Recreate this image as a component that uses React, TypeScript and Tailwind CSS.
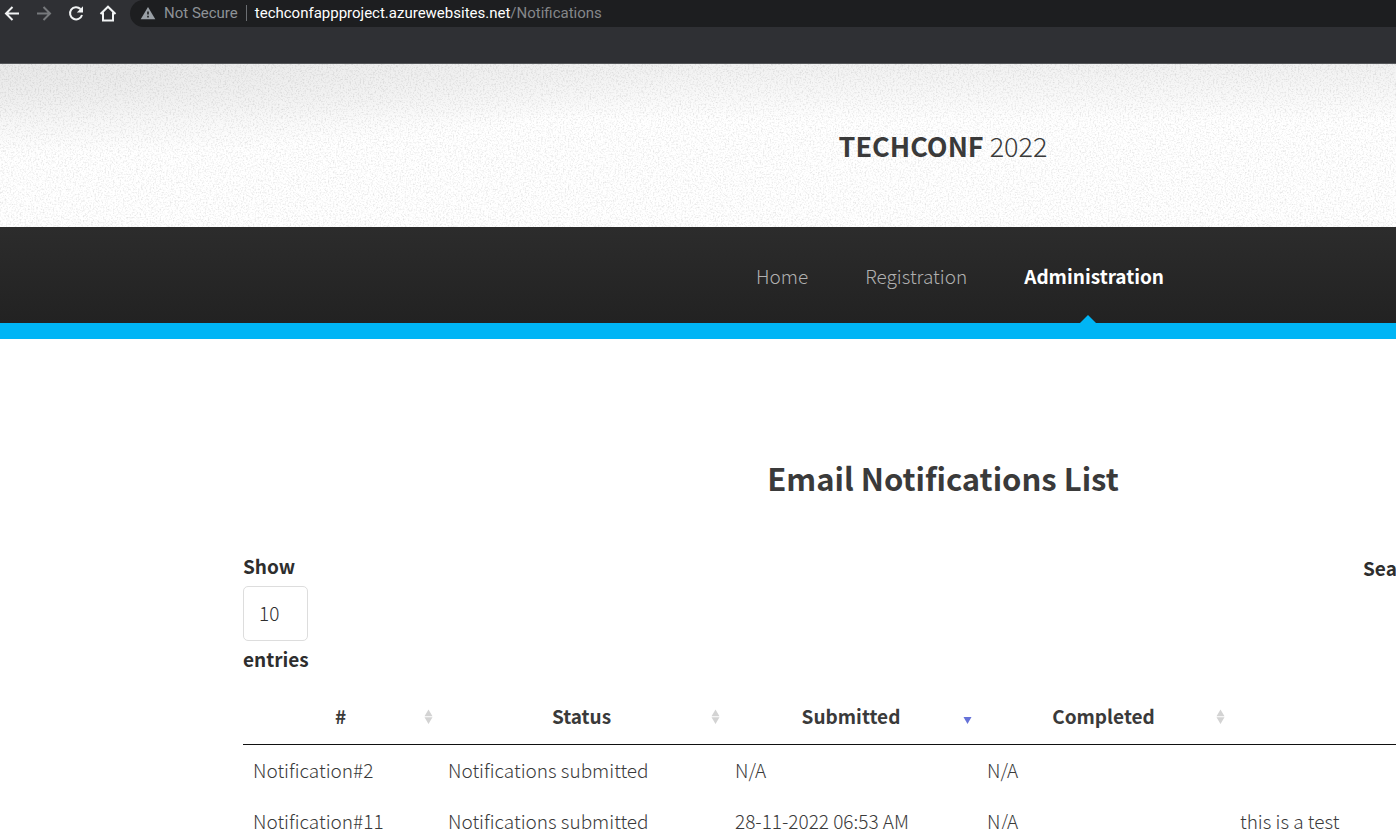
import React from 'react';

const rows = [
  { id: 'Notification#2', status: 'Notifications submitted', submitted: 'N/A', completed: 'N/A', subject: '' },
  { id: 'Notification#11', status: 'Notifications submitted', submitted: '28-11-2022 06:53 AM', completed: 'N/A', subject: 'this is a test' },
];

function Grain({ id, strength }: { id: string; strength: string }) {
  return (
    <svg className="pointer-events-none absolute inset-0 h-full w-full" aria-hidden="true">
      <filter id={id} x="0" y="0" width="100%" height="100%">
        <feTurbulence type="fractalNoise" baseFrequency="0.6" numOctaves="2" seed="4" />
        <feColorMatrix values={`0 0 0 0 0  0 0 0 0 0  0 0 0 0 0  ${strength}`} />
      </filter>
      <rect width="100%" height="100%" filter={`url(#${id})`} />
    </svg>
  );
}

function BrowserBar() {
  return (
    <div className="h-16 border-b border-[#55575a] bg-[#2f3034] font-[Roboto,sans-serif] text-[15px] font-normal leading-5">
      <div className="flex h-[27px] items-center">
        <div className="flex shrink-0 items-center gap-3 pl-[2px] pr-3 text-[#f1f3f4]">
          <button type="button" aria-label="Back">
            <svg width="20" height="20" viewBox="0 0 20 20" fill="none" stroke="currentColor" strokeWidth="2">
              <path d="M17 9.500H4M10.500 3L4 9.500l6.500 6.500" />
            </svg>
          </button>
          <button type="button" aria-label="Forward" className="text-[#77797c]">
            <svg width="20" height="20" viewBox="0 0 20 20" fill="none" stroke="currentColor" strokeWidth="2">
              <path d="M3 9.500h13M9.500 3L16 9.500l-6.500 6.500" />
            </svg>
          </button>
          <button type="button" aria-label="Reload">
            <svg width="20" height="20" viewBox="0 0 20 20" fill="none" stroke="currentColor" strokeWidth="2">
              <path d="M14.500 5A6.100 6.100 0 1 0 16 11" />
              <path d="M17 2.300V8.500h-6.200z" fill="currentColor" stroke="none" />
            </svg>
          </button>
          <button type="button" aria-label="Home page">
            <svg width="20" height="20" viewBox="0 0 20 20" fill="none" stroke="currentColor" strokeWidth="2">
              <path d="M2.500 10L10 2.700l7.500 7.300M5 8.500v8h10V8.500" />
            </svg>
          </button>
        </div>
        <div className="flex h-full flex-1 items-center rounded-l-full bg-[#1d1e20] pb-px pl-[10px]">
          <svg width="16" height="14" viewBox="0 0 16 14" aria-hidden="true">
            <path d="M8 1L15.300 13.300H0.700z" fill="#9aa0a6" />
            <path d="M7.200 5.500h1.600v3H7.200zM7.200 9.800h1.600v1.600H7.200z" fill="#1d1e20" />
          </svg>
          <span className="pl-2 text-[#8d9297]">Not Secure</span>
          <span className="mx-2 h-4 w-px bg-[#6b6e72]" />
          <span className="text-white">techconfappproject.azurewebsites.net</span>
          <span className="text-[#85878a]">/Notifications</span>
        </div>
      </div>
    </div>
  );
}

function SortIcon({ active = false }: { active?: boolean }) {
  return (
    <svg className="absolute right-1 top-1/2 -mt-2" width="11" height="16" viewBox="0 0 11 16" aria-hidden="true">
      {active ? (
        <path d="M1.500 8h8L5.500 15z" fill="#6672d8" />
      ) : (
        <path d="M1.500 7.200h8L5.500 0.500zM1.500 8.200h8L5.500 15z" fill="#d3d3d3" />
      )}
    </svg>
  );
}

function HeadCell({ label, width, active }: { label: string; width: string; active?: boolean }) {
  return (
    <th className={`relative h-[56px] border-b border-[#111111] p-0 pb-[2px] font-bold ${width}`}>
      {label}
      <SortIcon active={active} />
    </th>
  );
}

export default function App() {
  return (
    <div className="h-screen overflow-hidden bg-white font-['Noto_Sans_CJK_SC',sans-serif] text-[19px] font-light leading-7 text-[#3a3a3a]">
      <BrowserBar />
      <div className="min-w-[1886px]">
        <header className="relative flex h-[163px] items-center justify-center bg-[radial-gradient(ellipse_700px_90px_at_0%_0%,#e9e9e9,transparent),linear-gradient(#f1f1f1,#ffffff_35%)]">
          <Grain id="header-grain" strength="0 0 0 0.25 -0.115" />
          <h1 className="relative text-[27px] leading-10">
            <strong className="font-bold">TECHCONF</strong> 2022
          </h1>
        </header>
        <nav className="flex h-28 justify-center gap-[57px] border-b-[16px] border-[#00b5f5] bg-linear-to-b from-[#2c2c2c] to-[#222222] pl-[34px] leading-[98px] text-[#b0b0b0]">
          <a href="#home">Home</a>
          <a href="#registration">Registration</a>
          <a href="#administration" className="relative h-24 font-bold text-white">
            Administration
            <svg className="absolute bottom-0 left-1/2 -ml-[14px]" width="16" height="8" viewBox="0 0 16 8" aria-hidden="true">
              <path d="M0 8L8 0l8 8z" fill="#00b5f5" />
            </svg>
          </a>
        </nav>
        <main className="mx-auto w-full max-w-[1400px] pt-[114px]">
          <h2 className="text-center text-[31px] font-bold leading-[50px]">Email Notifications List</h2>
          <div className="mt-[49px] flex items-start justify-between font-bold text-[#2e2e2e]">
            <div className="flex flex-col items-start">
              <label htmlFor="page-length">Show</label>
              <select
                id="page-length"
                className="mb-1 mt-[6px] h-[55px] w-[65px] appearance-none rounded-[5px] border border-[#dddddd] bg-white px-[15px] pb-[2px] font-light"
              >
                <option>10</option>
              </select>
              <label htmlFor="page-length">entries</label>
            </div>
            <div className="flex w-[280px] items-start gap-2 pt-[2px]">
              <label htmlFor="search">Search:</label>
              <input id="search" type="search" className="h-[55px] min-w-0 flex-1 rounded-[5px] border border-[#dddddd]" />
            </div>
          </div>
          <table className="mt-4 w-full table-fixed border-separate border-spacing-0">
            <thead>
              <tr>
                <HeadCell label="#" width="w-[195px]" />
                <HeadCell label="Status" width="w-[287px]" />
                <HeadCell label="Submitted" width="w-[252px]" active />
                <HeadCell label="Completed" width="w-[253px]" />
                <th className="border-b border-[#111111]" />
              </tr>
            </thead>
            <tbody>
              {rows.map((row) => (
                <tr key={row.id} className="h-[51px]">
                  <td className="px-[10px] pb-[2px] pt-0">{row.id}</td>
                  <td className="px-[10px] pb-[2px] pt-0">{row.status}</td>
                  <td className="px-[10px] pb-[2px] pt-0">{row.submitted}</td>
                  <td className="px-[10px] pb-[2px] pt-0">{row.completed}</td>
                  <td className="px-[10px] pb-[2px] pt-0">{row.subject}</td>
                </tr>
              ))}
            </tbody>
          </table>
        </main>
      </div>
    </div>
  );
}
